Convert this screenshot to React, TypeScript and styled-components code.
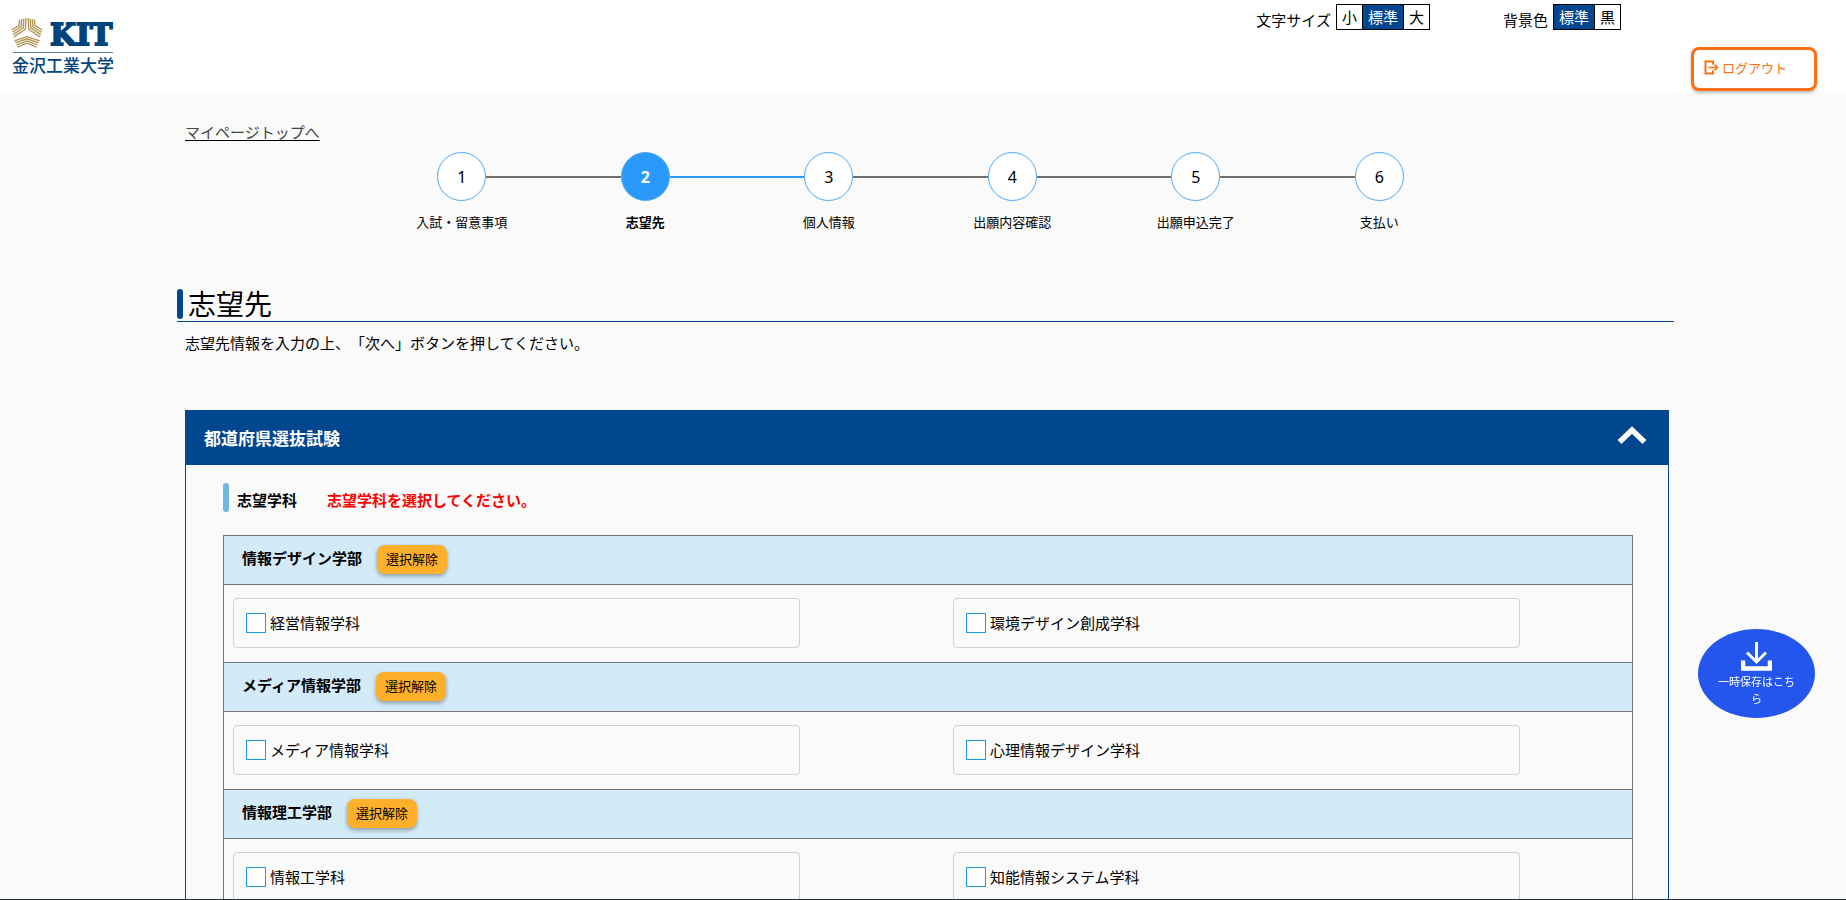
import React from 'react';
import styled, { createGlobalStyle } from 'styled-components';

const GlobalStyle = createGlobalStyle`
  *, *::before, *::after { box-sizing: border-box; }
  body {
    margin: 0;
    background: #fafafa;
    color: #000;
    font: 15px/24px "Noto Sans", "Noto Sans CJK JP", sans-serif;
    text-spacing-trim: space-all;
    overflow: hidden;
  }
  button, input { font-family: inherit; }
`;

const NAVY = '#00478f';

const Page = styled.div`
  height: 100vh;
  overflow: hidden;
`;

const Header = styled.header`
  height: 92px;
  display: flex;
  justify-content: space-between;
  padding: 0 29px 0 10px;
  background: #fff;
`;

const LogoLink = styled.a`
  padding-top: 16px;
  svg { display: block; }
`;

const Tools = styled.div`
  display: flex;
  gap: 70px;
`;

const Settings = styled.div`
  display: flex;
  align-items: flex-start;
  gap: 73px;
  padding-top: 4px;
`;

const Setting = styled.div`
  display: flex;
  align-items: flex-start;
  gap: 5px;
`;

const SettingLabel = styled.span`
  padding-top: 4px;
`;

const Choices = styled.div`
  display: flex;
`;

const Choice = styled.button<{ $on?: boolean }>`
  height: 26px;
  padding: 0 5px;
  border: 1px solid #000;
  background: ${p => (p.$on ? NAVY : '#fff')};
  color: ${p => (p.$on ? '#fff' : '#000')};
  font-size: 15px;
  line-height: 20px;
  & + & { margin-left: -1px; }
`;

const Logout = styled.button`
  display: flex;
  align-items: center;
  gap: 3px;
  width: 126px;
  height: 44px;
  margin-top: 47px;
  padding: 0 0 4px 10px;
  border: 3px solid #ff6f0f;
  border-radius: 8px;
  background: #fff;
  box-shadow: 0 2px 3px rgba(0, 0, 0, 0.25);
  color: #ff6f0f;
  font-size: 13px;
`;

const Main = styled.main`
  padding: 28px 177px 0 185px;
`;

const BackLink = styled.a`
  display: block;
  width: max-content;
  height: 32px;
  color: #444;
  text-decoration: underline;
  text-decoration-color: #000;
  text-underline-offset: 2px;
`;

const Steps = styled.ol`
  display: flex;
  max-width: 1114px;
  margin: 0 auto;
  padding: 0 13px 0 0;
  list-style: none;
`;

const Step = styled.li<{ $current?: boolean }>`
  flex: 1;
  display: flex;
  flex-direction: column;
  align-items: center;
  gap: 11px;
  font-size: 13px;
  line-height: 20px;
  font-weight: ${p => (p.$current ? 700 : 400)};
`;

const StepTrack = styled.div`
  display: flex;
  align-items: center;
  width: 100%;
`;

const StepLine = styled.span<{ $tone: 'none' | 'grey' | 'blue' }>`
  flex: 1;
  height: 2px;
  background: ${p => ({ none: 'transparent', grey: '#6e6e6e', blue: '#2a99fb' })[p.$tone]};
`;

const StepCircle = styled.span<{ $current?: boolean }>`
  display: grid;
  place-items: center;
  width: 49px;
  height: 49px;
  border: 1px solid #4aaaf8;
  border-radius: 50%;
  background: ${p => (p.$current ? '#2a99fb' : '#fff')};
  color: ${p => (p.$current ? '#fff' : '#000')};
  font-size: 16px;
`;

const PageTitle = styled.h1`
  display: flex;
  align-items: center;
  gap: 5px;
  margin: 56px -5px 0 -8px;
  padding-bottom: 1px;
  border-bottom: 1px solid ${NAVY};
  font-size: 28px;
  line-height: 32px;
  font-weight: 400;
  &::before {
    content: '';
    width: 6px;
    height: 30px;
    border-radius: 3px;
    background: ${NAVY};
  }
`;

const Lead = styled.p`
  margin: 9px 0 55px;
`;

const Panel = styled.section`
  border: 1px solid ${NAVY};
`;

const PanelHead = styled.button`
  display: flex;
  justify-content: space-between;
  align-items: center;
  width: 100%;
  height: 54px;
  padding: 0 21px 2px 18px;
  border: 0;
  background: ${NAVY};
  color: #fff;
  font-size: 17px;
  font-weight: 700;
`;

const PanelBody = styled.div`
  padding: 18px 35px 40px 37px;
`;

const SubHead = styled.div`
  display: flex;
  align-items: flex-start;
  height: 52px;
  font-weight: 700;
  &::before {
    content: '';
    width: 6px;
    height: 29px;
    margin-right: 8px;
    border-radius: 3px;
    background: #6cb9dd;
  }
`;

const SubTitle = styled.h2`
  margin: 0 30px 0 0;
  padding-top: 5px;
  font-size: 15px;
`;

const Warning = styled.p`
  margin: 0;
  padding-top: 5px;
  color: #f00;
`;

const Groups = styled.div`
  border: 1px solid #777;
  border-top: 0;
`;

const GroupHead = styled.div`
  display: flex;
  align-items: flex-start;
  gap: 15px;
  height: 50px;
  padding: 9px 18px;
  border: solid #777;
  border-width: 1px 0;
  background: #d3eaf8;
`;

const GroupName = styled.h3`
  margin: 0;
  font-size: 15px;
  line-height: 26px;
`;

const ClearButton = styled.button`
  height: 29px;
  padding: 0 9px 2px;
  border: 0;
  border-radius: 8px;
  background: #ffb02b;
  box-shadow: 0 2px 4px rgba(0, 0, 0, 0.35);
  color: #000;
  font-size: 13px;
  line-height: 20px;
`;

const Options = styled.div`
  display: grid;
  grid-template-columns: 1fr 1fr;
  column-gap: 153px;
  padding: 13px 112px 14px 9px;
`;

const Option = styled.label`
  display: flex;
  align-items: center;
  gap: 4px;
  height: 50px;
  padding-left: 12px;
  border: 1px solid #d0d0d0;
  border-radius: 4px;
`;

const Check = styled.input`
  appearance: none;
  width: 20px;
  height: 20px;
  margin: 0;
  border: 1px solid #1b99e5;
  background: #fff;
  &:checked { background: #1b99e5; }
`;

const SaveButton = styled.button`
  position: fixed;
  right: 31px;
  top: 629px;
  display: flex;
  flex-direction: column;
  align-items: center;
  gap: 2px;
  width: 117px;
  height: 89px;
  padding: 13px 18px 0;
  border: 0;
  border-radius: 50%;
  background: #2456ee;
  color: #fff;
  font-size: 11px;
  line-height: 17px;
  svg { flex: none; }
`;

const BottomEdge = styled.div`
  position: fixed;
  inset: auto 0 0;
  height: 1px;
  background: #24303a;
`;

const Logo = () => (
  <svg width="116" height="68" viewBox="0 0 116 68" role="img" aria-label="KIT 金沢工業大学">
    <g stroke="#b0924f" strokeWidth="1.3" fill="none">
      {[0, 1, 2, 3].map(i => (
        <g key={i}>
          <path d={`M${9.6 + i * 2.1} ${3.6 - i * 0.5}L${9 + i * 2.1} ${9.6 + i * 1.2}L${1.6 + i * 0.8} ${14 + i * 2.3}`} />
          <path d={`M${24.4 - i * 2.1} ${3.6 - i * 0.5}L${25 - i * 2.1} ${9.6 + i * 1.2}L${32.4 - i * 0.8} ${14 + i * 2.3}`} />
          <path d={`M${4.4 + i} ${24.8 + i * 2.1}L17 ${20.6 + i * 2.2}L${29.6 - i} ${24.8 + i * 2.1}`} />
        </g>
      ))}
    </g>
    <text x="40" y="29" fontFamily='"DejaVu Serif", serif' fontWeight="700" fontSize="30" fill="#00447c" stroke="#00447c" strokeWidth="1.8">KIT</text>
    <path d="M3 36.5H103" stroke="#4d83b3" />
    <text x="2" y="56" fontFamily='"Noto Sans CJK JP", sans-serif' fontWeight="500" fontSize="17" fill="#00447c">金沢工業大学</text>
  </svg>
);

const LogoutIcon = () => (
  <svg width="15" height="15" viewBox="0 0 15 15" fill="none" stroke="currentColor" strokeWidth="2">
    <path d="M9 4.500V1.500H1.500V13.500H9V10.500" />
    <path d="M4.500 7.500H13.500M10.500 4.500L13.500 7.500L10.500 10.500" strokeWidth="1.6" />
  </svg>
);

const ChevronUp = () => (
  <svg width="30" height="22" viewBox="0 0 30 22" fill="none" stroke="#fff" strokeWidth="5.500">
    <path d="M2.500 16L15 4L27.500 16" />
  </svg>
);

const SaveIcon = () => (
  <svg width="31" height="29" viewBox="0 0 31 29" fill="none" stroke="#fff">
    <path d="M2 18.500V26.500H29V18.500" strokeWidth="4.500" />
    <path d="M15.500 0V20M6 10.500L15.500 20L25 10.500" strokeWidth="3" />
  </svg>
);

type Tone = 'none' | 'grey' | 'blue';

const steps: { label: string; before: Tone; after: Tone; current?: boolean }[] = [
  { label: '入試・留意事項', before: 'none', after: 'grey' },
  { label: '志望先', before: 'grey', after: 'blue', current: true },
  { label: '個人情報', before: 'blue', after: 'grey' },
  { label: '出願内容確認', before: 'grey', after: 'grey' },
  { label: '出願申込完了', before: 'grey', after: 'grey' },
  { label: '支払い', before: 'grey', after: 'none' },
];

const groups = [
  { name: '情報デザイン学部', options: ['経営情報学科', '環境デザイン創成学科'] },
  { name: 'メディア情報学部', options: ['メディア情報学科', '心理情報デザイン学科'] },
  { name: '情報理工学部', options: ['情報工学科', '知能情報システム学科'] },
];

export default function App() {
  return (
    <Page>
      <GlobalStyle />
      <Header>
        <LogoLink href="#"><Logo /></LogoLink>
        <Tools>
          <Settings>
            <Setting>
              <SettingLabel>文字サイズ</SettingLabel>
              <Choices>
                <Choice>小</Choice>
                <Choice $on>標準</Choice>
                <Choice>大</Choice>
              </Choices>
            </Setting>
            <Setting>
              <SettingLabel>背景色</SettingLabel>
              <Choices>
                <Choice $on>標準</Choice>
                <Choice>黒</Choice>
              </Choices>
            </Setting>
          </Settings>
          <Logout><LogoutIcon />ログアウト</Logout>
        </Tools>
      </Header>
      <Main>
        <BackLink href="#">マイページトップへ</BackLink>
        <Steps>
          {steps.map((s, i) => (
            <Step key={s.label} $current={s.current}>
              <StepTrack>
                <StepLine $tone={s.before} />
                <StepCircle $current={s.current}>{i + 1}</StepCircle>
                <StepLine $tone={s.after} />
              </StepTrack>
              {s.label}
            </Step>
          ))}
        </Steps>
        <PageTitle>志望先</PageTitle>
        <Lead>志望先情報を入力の上、「次へ」ボタンを押してください。</Lead>
        <Panel>
          <PanelHead aria-expanded="true">都道府県選抜試験<ChevronUp /></PanelHead>
          <PanelBody>
            <SubHead>
              <SubTitle>志望学科</SubTitle>
              <Warning>志望学科を選択してください。</Warning>
            </SubHead>
            <Groups>
              {groups.map(g => (
                <div key={g.name}>
                  <GroupHead>
                    <GroupName>{g.name}</GroupName>
                    <ClearButton>選択解除</ClearButton>
                  </GroupHead>
                  <Options>
                    {g.options.map(o => (
                      <Option key={o}><Check type="checkbox" />{o}</Option>
                    ))}
                  </Options>
                </div>
              ))}
            </Groups>
          </PanelBody>
        </Panel>
      </Main>
      <SaveButton><SaveIcon />一時保存はこちら</SaveButton>
      <BottomEdge />
    </Page>
  );
}
